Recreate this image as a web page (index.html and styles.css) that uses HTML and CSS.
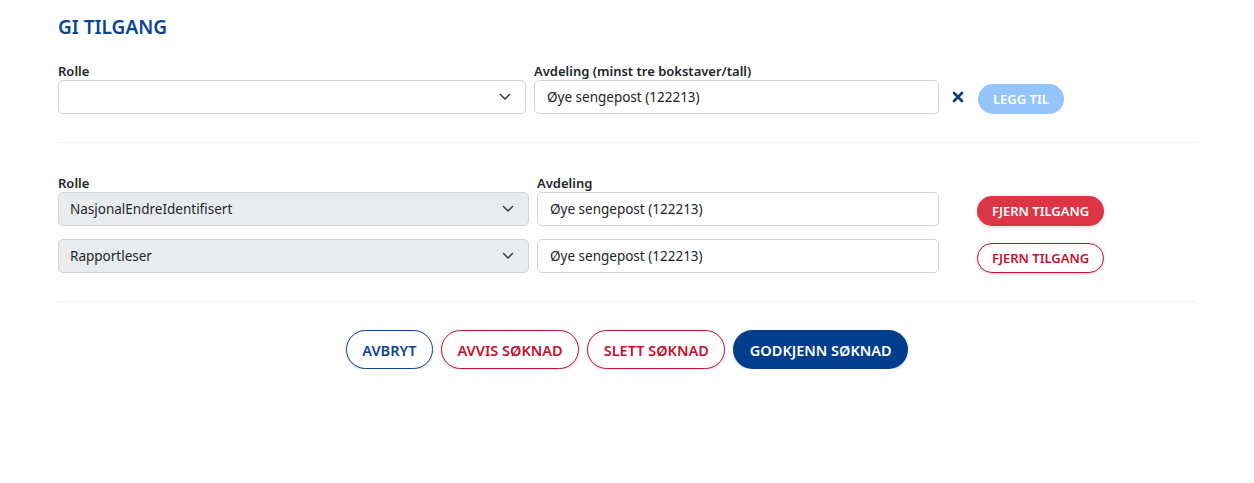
FILE: index.html
```html
<!DOCTYPE html>
<html lang="no">
<head>
<meta charset="utf-8">
<title>Gi tilgang</title>
<link rel="stylesheet" href="styles.css">
</head>
<body>
<main class="container">
  <h2 class="title">GI TILGANG</h2>

  <div class="row row-new">
    <div class="field">
      <label class="label">Rolle</label>
      <div class="select">
        <span class="select-text"></span>
        <svg class="chev" width="12" height="8" viewBox="0 0 12 8"><path d="M1.5 1.5 L6 6 L10.5 1.5" fill="none" stroke="#343a40" stroke-width="1.5" stroke-linecap="round" stroke-linejoin="round"/></svg>
      </div>
    </div>
    <div class="field">
      <label class="label">Avdeling (minst tre bokstaver/tall)</label>
      <div class="input">Øye sengepost (122213)</div>
    </div>
    <div class="actions-new">
      <svg class="clear" width="12" height="12" viewBox="0 0 12 12"><path d="M2 2 L10 10 M10 2 L2 10" stroke="#0b3a7a" stroke-width="2.6" stroke-linecap="round"/></svg>
      <button class="btn btn-sm btn-disabled">LEGG TIL</button>
    </div>
  </div>

  <hr class="sep">

  <div class="existing">
    <div class="row row-old">
      <div class="field">
        <label class="label">Rolle</label>
        <div class="select filled">
          <span class="select-text">NasjonalEndreIdentifisert</span>
          <svg class="chev" width="12" height="8" viewBox="0 0 12 8"><path d="M1.5 1.5 L6 6 L10.5 1.5" fill="none" stroke="#343a40" stroke-width="1.5" stroke-linecap="round" stroke-linejoin="round"/></svg>
        </div>
      </div>
      <div class="field">
        <label class="label">Avdeling</label>
        <div class="input">Øye sengepost (122213)</div>
      </div>
      <div class="actions-old">
        <button class="btn btn-sm btn-danger">FJERN TILGANG</button>
      </div>
    </div>
    <div class="row row-old">
      <div class="field">
        <div class="select filled">
          <span class="select-text">Rapportleser</span>
          <svg class="chev" width="12" height="8" viewBox="0 0 12 8"><path d="M1.5 1.5 L6 6 L10.5 1.5" fill="none" stroke="#343a40" stroke-width="1.5" stroke-linecap="round" stroke-linejoin="round"/></svg>
        </div>
      </div>
      <div class="field">
        <div class="input">Øye sengepost (122213)</div>
      </div>
      <div class="actions-old">
        <button class="btn btn-sm btn-outline-danger">FJERN TILGANG</button>
      </div>
    </div>
  </div>

  <hr class="sep sep2">

  <div class="footer">
    <button class="btn btn-lg btn-outline-primary">AVBRYT</button>
    <button class="btn btn-lg btn-outline-danger">AVVIS SØKNAD</button>
    <button class="btn btn-lg btn-outline-danger">SLETT SØKNAD</button>
    <button class="btn btn-lg btn-primary">GODKJENN SØKNAD</button>
  </div>
</main>
</body>
</html>
```

FILE: styles.css
```css
* { box-sizing: border-box; }
body {
  margin: 0;
  background: #fff;
  font-family: "Noto Sans", "Open Sans", "DejaVu Sans", sans-serif;
  color: #212529;
}
.container {
  width: 1140px;
  margin: 0 auto;
  padding-left: 1px;
}
.title {
  margin: 0;
  padding-top: 14px;
  font-size: 19px;
  line-height: 26px;
  font-weight: 600;
  color: #0a4593;
  letter-spacing: 0;
}
.row {
  display: grid;
  align-items: end;
}
.row-new {
  margin-top: 22px;
  grid-template-columns: 468px 405px auto;
  column-gap: 8px;
}
.row-old {
  grid-template-columns: 471px 402px auto;
  column-gap: 8px;
  margin-bottom: 13px;
}
.field { display: flex; flex-direction: column; }
.label {
  font-size: 13px;
  line-height: 18px;
  font-weight: 600;
  color: #212529;
  margin-bottom: 0;
}
.select, .input {
  height: 34px;
  border: 1px solid #ced4da;
  border-radius: 5px;
  background: #fff;
  display: flex;
  align-items: center;
  font-size: 13.5px;
  color: #212529;
}
.select {
  justify-content: space-between;
  padding: 0 14px 0 11px;
}
.select.filled { background: #e9ecef; }
.input { padding: 0 12px; }
.chev { display: block; }
.actions-new {
  display: flex;
  align-items: center;
  height: 34px;
  padding-left: 5px;
  gap: 14px;
}
.clear { display: block; }
.actions-old {
  display: flex;
  align-items: center;
  height: 34px;
  padding-left: 30px;
}
.btn {
  font-family: inherit;
  font-weight: 600;
  border-radius: 999px;
  border: 1px solid transparent;
  cursor: pointer;
  box-shadow: 0 1px 3px rgba(0,0,0,0.18);
  white-space: nowrap;
}
.btn-sm {
  height: 30px;
  font-size: 13px;
  padding: 0 14px;
  margin-top: 4px;
}
.btn-lg {
  height: 39px;
  font-size: 14.5px;
  padding: 0 15.5px;
}
.btn-disabled {
  background: #95c3fb;
  color: #fff;
  box-shadow: none;
  padding: 0 14px;
}
.btn-danger { background: #dc3545; color: #fff; }
.btn-outline-danger { background: #fff; color: #c8102e; border-color: #c8102e; }
.btn-outline-primary { background: #fff; color: #0a4593; border-color: #0a4593; }
.btn-primary { background: #003d8c; color: #fff; }
.sep {
  margin: 28px 0 0;
  border: 0;
  border-top: 1px solid #eef1f4;
}
.existing { padding-top: 31px; }
.sep2 { margin-top: 28px; }
.footer {
  display: flex;
  justify-content: center;
  gap: 8px;
  padding-top: 28px;
  margin-left: -1px;
}
```
